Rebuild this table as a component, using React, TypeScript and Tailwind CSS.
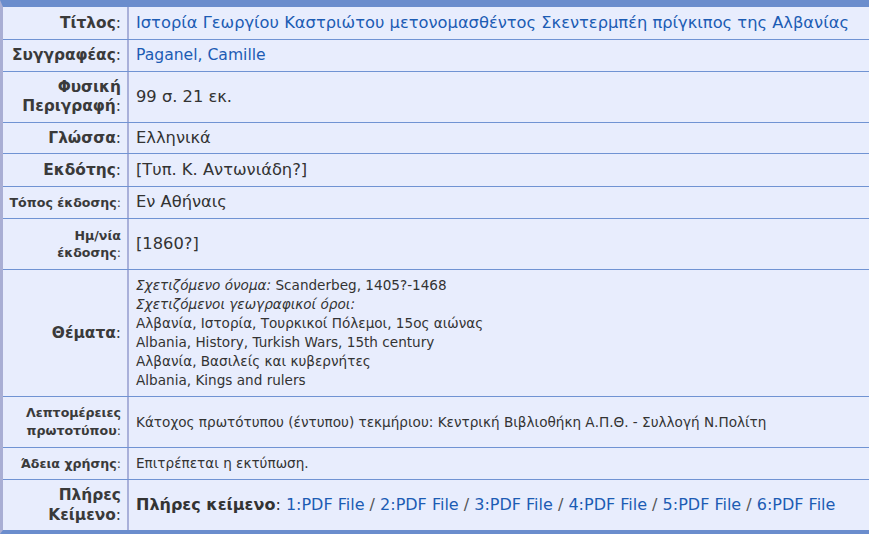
import React from "react";

const FONT = { fontFamily: '"DejaVu Sans", Verdana, sans-serif' };

type Row = {
  h: string;
  label: React.ReactNode;
  value: React.ReactNode;
  last?: boolean;
};

function Label({ lines, small, lh }: { lines: string[]; small?: boolean; lh?: string }) {
  return (
    <div className={`text-right font-bold text-[#3a3a3a] ${small ? "text-[12.6px]" : "text-[15.4px]"} ${lh ?? "leading-[19px]"}`}>
      {lines.map((l, i) => (
        <div key={i}>
          {i === lines.length - 1 ? (
            <>
              {l}
              <span className="font-normal">:</span>
            </>
          ) : (
            l
          )}
        </div>
      ))}
    </div>
  );
}

export default function App() {
  const pdfs = [1, 2, 3, 4, 5, 6];
  const big = "text-[16.3px]";
  const small = "text-[13.6px]";
  const rows: Row[] = [
    {
      h: "h-[33px]",
      label: <Label lines={["Τίτλος"]} />,
      value: (
        <span className={`${big} text-[#1c5cb4]`}>
          Ιστορία Γεωργίου Καστριώτου μετονομασθέντος Σκεντερμπέη πρίγκιπος της Αλβανίας
        </span>
      ),
    },
    {
      h: "h-[32px]",
      label: <Label lines={["Συγγραφέας"]} />,
      value: <span className="text-[15.6px] text-[#1c5cb4]">Paganel, Camille</span>,
    },
    {
      h: "h-[51px]",
      label: <Label lines={["Φυσική", "Περιγραφή"]} />,
      value: <span className={`${big} text-[#333]`}>99 σ. 21 εκ.</span>,
    },
    {
      h: "h-[31px]",
      label: <Label lines={["Γλώσσα"]} />,
      value: <span className={`${big} text-[#333]`}>Ελληνικά</span>,
    },
    {
      h: "h-[33px]",
      label: <Label lines={["Εκδότης"]} />,
      value: <span className={`${big} text-[#333]`}>[Τυπ. Κ. Αντωνιάδη?]</span>,
    },
    {
      h: "h-[32px]",
      label: <Label lines={["Τόπος έκδοσης"]} small />,
      value: <span className={`${big} text-[#333]`}>Εν Αθήναις</span>,
    },
    {
      h: "h-[51px]",
      label: <Label lines={["Ημ/νία", "έκδοσης"]} small lh="leading-[17px]" />,
      value: <span className={`${big} text-[#333]`}>[1860?]</span>,
    },
    {
      h: "h-[127px]",
      label: <Label lines={["Θέματα"]} />,
      value: (
        <div className={`${small} leading-[19px] text-[#333]`}>
          <div>
            <i>Σχετιζόμενο όνομα:</i> Scanderbeg, 1405?-1468
          </div>
          <div>
            <i>Σχετιζόμενοι γεωγραφικοί όροι:</i>
          </div>
          <div>Αλβανία, Ιστορία, Τουρκικοί Πόλεμοι, 15ος αιώνας</div>
          <div>Albania, History, Turkish Wars, 15th century</div>
          <div>Αλβανία, Βασιλείς και κυβερνήτες</div>
          <div>Albania, Kings and rulers</div>
        </div>
      ),
    },
    {
      h: "h-[51px]",
      label: <Label lines={["Λεπτομέρειες", "πρωτοτύπου"]} small lh="leading-[18px]" />,
      value: (
        <span className={`${small} text-[#333]`}>
          Κάτοχος πρωτότυπου (έντυπου) τεκμήριου: Κεντρική Βιβλιοθήκη Α.Π.Θ. - Συλλογή Ν.Πολίτη
        </span>
      ),
    },
    {
      h: "h-[32px]",
      label: <Label lines={["Άδεια χρήσης"]} small />,
      value: <span className={`${small} text-[#333]`}>Επιτρέπεται η εκτύπωση.</span>,
    },
    {
      h: "h-[50px]",
      last: true,
      label: <Label lines={["Πλήρες", "Κείμενο"]} lh="leading-[20px]" />,
      value: (
        <span className="text-[16px] text-[#333]">
          <b>Πλήρες κείμενο</b>:{" "}
          {pdfs.map((n, i) => (
            <React.Fragment key={n}>
              <span className="text-[#1c5cb4]">{n}:PDF File</span>
              {i < pdfs.length - 1 && <span className="text-[#555]"> / </span>}
            </React.Fragment>
          ))}
        </span>
      ),
    },
  ];

  return (
    <div className="w-[869px] h-[534px] overflow-hidden bg-[#e8edfd]" style={FONT}>
      <div className="flex flex-col border-t-[7px] border-t-[#6b8dcd] border-b-[4px] border-b-[#6b8dcd] border-l-[3px] border-l-[#a9aed4]">
        {rows.map((r, i) => (
          <div
            key={i}
            className={`flex ${r.h} ${r.last ? "" : "border-b border-b-[#7093d3]"}`}
          >
            <div className="w-[126px] shrink-0 flex items-center justify-end pr-[6px] border-r-2 border-r-[#a9b0da]">
              {r.label}
            </div>
            <div className="flex-1 flex items-center pl-[7px] whitespace-nowrap">{r.value}</div>
          </div>
        ))}
      </div>
    </div>
  );
}
